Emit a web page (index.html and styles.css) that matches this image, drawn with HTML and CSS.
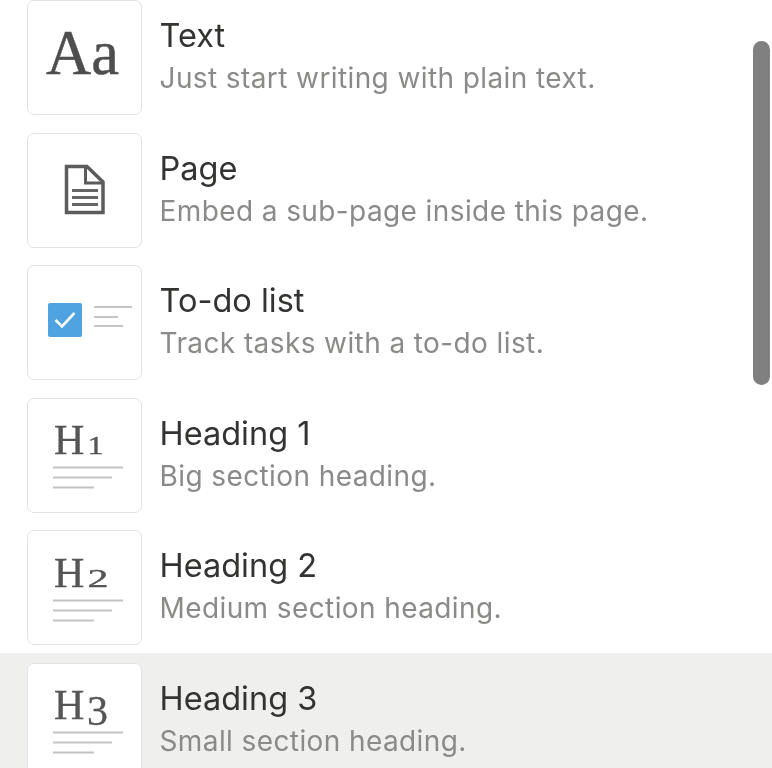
FILE: index.html
```html
<!DOCTYPE html>
<html lang="en">
<head>
<meta charset="utf-8">
<title>Block menu</title>
<link rel="stylesheet" href="styles.css">
</head>
<body>
<div class="menu">
  <ul class="list">
    <li class="row">
      <div class="card">
        <svg class="icon" viewBox="0 0 115 115"><text class="aa" x="19" y="74" textLength="73" lengthAdjust="spacingAndGlyphs">Aa</text></svg>
      </div>
      <div class="label"><div class="title">Text</div><div class="desc">Just start writing with plain text.</div></div>
    </li>
    <li class="row">
      <div class="card">
        <svg class="icon" viewBox="0 0 115 115">
          <path class="page" d="M39.5 34.5H60L76 50V80.5H39.5Z"/>
          <path class="page-fold" d="M58.5 34.5V51H76"/>
          <path class="page-lines" d="M45 58.5H71M45 65.5H71M45 72.5H71"/>
        </svg>
      </div>
      <div class="label"><div class="title">Page</div><div class="desc">Embed a sub-page inside this page.</div></div>
    </li>
    <li class="row">
      <div class="card">
        <svg class="icon" viewBox="0 0 115 115">
          <rect class="box" x="21" y="38" width="34" height="34" rx="2"/>
          <path class="tick" d="M28.5 55L35 61.5L47.5 48"/>
          <path class="rules" d="M67 42H105M67 52H91M67 61H96"/>
        </svg>
      </div>
      <div class="label"><div class="title">To-do list</div><div class="desc">Track tasks with a to-do list.</div></div>
    </li>
    <li class="row">
      <div class="card">
        <svg class="icon" viewBox="0 0 115 115">
          <text class="hd" x="27" y="57">H</text><text class="num" x="60.500" y="57" textLength="16" lengthAdjust="spacingAndGlyphs">1</text>
          <path class="rules" d="M26 70.500H96M26 80.500H85M26 90.500H67"/>
        </svg>
      </div>
      <div class="label"><div class="title">Heading 1</div><div class="desc">Big section heading.</div></div>
    </li>
    <li class="row">
      <div class="card">
        <svg class="icon" viewBox="0 0 115 115">
          <text class="hd" x="27" y="57">H</text><text class="num" x="60.500" y="57" textLength="21" lengthAdjust="spacingAndGlyphs">2</text>
          <path class="rules" d="M26 70.500H96M26 80.500H85M26 90.500H67"/>
        </svg>
      </div>
      <div class="label"><div class="title">Heading 2</div><div class="desc">Medium section heading.</div></div>
    </li>
    <li class="row active">
      <div class="card">
        <svg class="icon" viewBox="0 0 115 115">
          <text class="hd" x="27" y="57">H</text><text class="hd" x="60" y="63">3</text>
          <path class="rules" d="M26 70.500H96M26 80.500H85M26 90.500H67"/>
        </svg>
      </div>
      <div class="label"><div class="title">Heading 3</div><div class="desc">Small section heading.</div></div>
    </li>
  </ul>
  <div class="thumb"></div>
</div>
</body>
</html>
```
FILE: styles.css
```css
html, body {
  margin: 0;
  padding: 0;
  height: 100%;
  background: #fff;
  overflow: hidden;
}

.menu {
  position: relative;
  height: 768px;
  overflow: hidden;
  font-family: Inter, "Liberation Sans", sans-serif;
  filter: blur(0.7px);
}

.list {
  list-style: none;
  margin: -10px 0 0;
  padding: 0;
}

.row {
  display: flex;
  gap: 17.5px;
  height: 132.6px;
  box-sizing: border-box;
  padding: 10px 0 0 27px;
}

.active {
  background: #efefee;
}

.card {
  width: 115px;
  height: 115px;
  flex: none;
  box-sizing: border-box;
  background: #fff;
  border: 1.5px solid #e2e2e2;
  border-radius: 7px;
  overflow: hidden;
}

.icon {
  display: block;
  width: 115px;
  height: 115px;
  margin: -1.5px;
}

.label {
  padding-top: 17px;
}

.title {
  font-size: 32.5px;
  line-height: 38px;
  color: #333331;
}

.desc {
  font-size: 28px;
  line-height: 38px;
  margin-top: 4px;
  letter-spacing: 0.4px;
  color: #8a8a88;
}

.thumb {
  position: absolute;
  left: 753px;
  top: 41px;
  width: 17px;
  height: 344px;
  border-radius: 9px;
  background: #808080;
}

.aa {
  font-family: "Liberation Serif", serif;
  font-size: 63px;
  fill: #4e4e4e;
  stroke: #4e4e4e;
  stroke-width: 0.5;
}

.hd,
.num {
  font-family: "Liberation Serif", serif;
  fill: #555;
  stroke: #555;
  stroke-width: 0.35;
}

.hd {
  font-size: 42px;
}

.num {
  font-size: 25px;
}

.page {
  fill: none;
  stroke: #5c5c5c;
  stroke-width: 3.5;
}

.page-fold {
  fill: none;
  stroke: #5c5c5c;
  stroke-width: 3;
}

.page-lines {
  fill: none;
  stroke: #666;
  stroke-width: 3;
}

.box {
  fill: #4fa3e0;
}

.tick {
  fill: none;
  stroke: #fff;
  stroke-width: 2.6;
}

.rules {
  fill: none;
  stroke: #c4c4c4;
  stroke-width: 2;
}
```
